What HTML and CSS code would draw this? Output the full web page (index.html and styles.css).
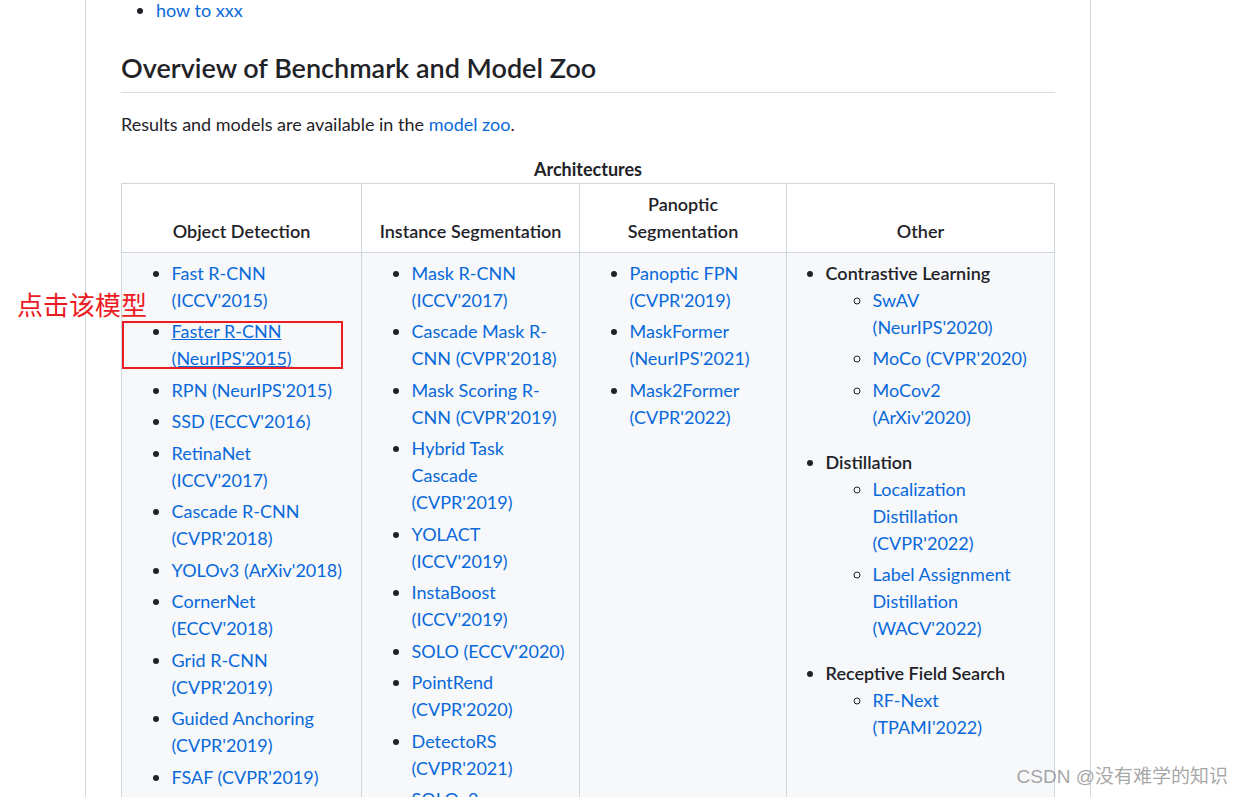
FILE: index.html
```html
<!DOCTYPE html>
<html>
  <head>
    <title>Overview of Benchmark and Model Zoo</title>
    <link rel="stylesheet" href="styles.css">
  </head>
  <body>
    <div class="readme">
      <ul class="toc">
        <li><a href="#">how to xxx</a></li>
      </ul>

      <h2>Overview of Benchmark and Model Zoo</h2>

      <p>Results and models are available in the <a href="#">model zoo</a>.</p>

      <table class="arch">
        <caption>Architectures</caption>
        <colgroup>
          <col class="c1">
          <col class="c2">
          <col class="c3">
          <col class="c4">
        </colgroup>
        <thead>
          <tr>
            <th>Object Detection</th>
            <th>Instance Segmentation</th>
            <th>Panoptic Segmentation</th>
            <th>Other</th>
          </tr>
        </thead>
        <tbody>
          <tr>
            <td class="det">
              <ul>
                <li><a href="#">Fast R-CNN (ICCV'2015)</a></li>
                <li><a href="#" class="hover">Faster R-CNN (NeurIPS'2015)</a></li>
                <li><a href="#">RPN (NeurIPS'2015)</a></li>
                <li><a href="#">SSD (ECCV'2016)</a></li>
                <li><a href="#">RetinaNet (ICCV'2017)</a></li>
                <li><a href="#">Cascade R-CNN (CVPR'2018)</a></li>
                <li><a href="#">YOLOv3 (ArXiv'2018)</a></li>
                <li><a href="#">CornerNet (ECCV'2018)</a></li>
                <li><a href="#">Grid R-CNN (CVPR'2019)</a></li>
                <li><a href="#">Guided Anchoring (CVPR'2019)</a></li>
                <li><a href="#">FSAF (CVPR'2019)</a></li>
              </ul>
            </td>
            <td>
              <ul>
                <li><a href="#">Mask R-CNN (ICCV'2017)</a></li>
                <li><a href="#">Cascade Mask R-CNN (CVPR'2018)</a></li>
                <li><a href="#">Mask Scoring R-CNN (CVPR'2019)</a></li>
                <li><a href="#">Hybrid Task Cascade (CVPR'2019)</a></li>
                <li><a href="#">YOLACT (ICCV'2019)</a></li>
                <li><a href="#">InstaBoost (ICCV'2019)</a></li>
                <li><a href="#">SOLO (ECCV'2020)</a></li>
                <li><a href="#">PointRend (CVPR'2020)</a></li>
                <li><a href="#">DetectoRS (CVPR'2021)</a></li>
                <li><a href="#">SOLOv2 (NeurIPS'2020)</a></li>
              </ul>
            </td>
            <td>
              <ul>
                <li><a href="#">Panoptic FPN (CVPR'2019)</a></li>
                <li><a href="#">MaskFormer (NeurIPS'2021)</a></li>
                <li><a href="#">Mask2Former (CVPR'2022)</a></li>
              </ul>
            </td>
            <td>
              <ul class="other">
                <li><b>Contrastive Learning</b>
                  <ul>
                    <li><a href="#">SwAV (NeurIPS'2020)</a></li>
                    <li><a href="#">MoCo (CVPR'2020)</a></li>
                    <li><a href="#">MoCov2 (ArXiv'2020)</a></li>
                  </ul>
                </li>
                <li><b>Distillation</b>
                  <ul>
                    <li><a href="#">Localization Distillation (CVPR'2022)</a></li>
                    <li><a href="#">Label Assignment Distillation (WACV'2022)</a></li>
                  </ul>
                </li>
                <li><b>Receptive Field Search</b>
                  <ul>
                    <li><a href="#">RF-Next (TPAMI'2022)</a></li>
                  </ul>
                </li>
              </ul>
            </td>
          </tr>
        </tbody>
      </table>
    </div>

    <div class="note">点击该模型</div>
    <div class="note-box"></div>
    <div class="watermark">CSDN @没有难学的知识</div>
  </body>
</html>
```

FILE: styles.css
```css
* {
  box-sizing: border-box;
}

body {
  margin: 0;
  background: #fff;
  color: #1f2328;
  font-family: Lato, "Noto Sans CJK SC", sans-serif;
  font-size: 18px;
  line-height: 1.5;
  overflow: hidden;
}

a {
  color: #0969da;
  text-decoration: none;
}

a.hover {
  text-decoration: underline;
}

.readme {
  width: 1006px;
  height: 797px;
  margin-left: 85px;
  padding: 0 35px;
  border-left: 1px solid #d0d7de;
  border-right: 1px solid #d0d7de;
  overflow: hidden;
}

ul {
  margin: 0;
  padding-left: 35px;
}

li + li {
  margin-top: 4.5px;
}

.toc {
  margin-top: -3.5px;
  margin-bottom: 18px;
}

h2 {
  margin: 27px 0 18px;
  padding-bottom: 8.1px;
  font-size: 27px;
  font-weight: 600;
  line-height: 1.25;
  border-bottom: 1px solid #d8dee4;
}

p {
  margin: 0 0 18px;
}

.arch {
  width: 933px;
  table-layout: fixed;
  border-collapse: collapse;
}

.arch caption {
  font-weight: 700;
}

.c1 { width: 240px; }
.c2 { width: 218px; }
.c3 { width: 207px; }
.c4 { width: 268px; }

.arch th,
.arch td {
  padding: 6.75px 14.6px;
  border: 1px solid #d0d7de;
}

.arch th {
  background: #fff;
  font-weight: 600;
  text-align: center;
  vertical-align: bottom;
}

.arch td {
  padding-right: 9px;
  background: #f6f8fa;
  vertical-align: top;
}

.arch td.det {
  padding-right: 14.6px;
}

.arch td ul {
  padding-left: 35px;
}

.arch td ul.other {
  padding-left: 24px;
  padding-right: 3px;
}

.other b {
  font-weight: 600;
}

.arch td .other ul {
  padding-left: 47px;
  list-style-type: circle;
  margin-bottom: 18px;
}

.other > li + li {
  margin-top: 0;
}

.note {
  position: absolute;
  left: 17px;
  top: 287px;
  color: #ec1c24;
  font-size: 26px;
  line-height: 36px;
}

.note-box {
  position: absolute;
  left: 122px;
  top: 321px;
  width: 221px;
  height: 48px;
  border: 2px solid #ec1c24;
}

.watermark {
  position: absolute;
  right: 15px;
  bottom: 8px;
  color: rgba(128, 128, 128, 0.7);
  font-size: 19px;
  font-family: "Liberation Sans", "Noto Sans CJK SC", sans-serif;
  line-height: 24px;
}
```
